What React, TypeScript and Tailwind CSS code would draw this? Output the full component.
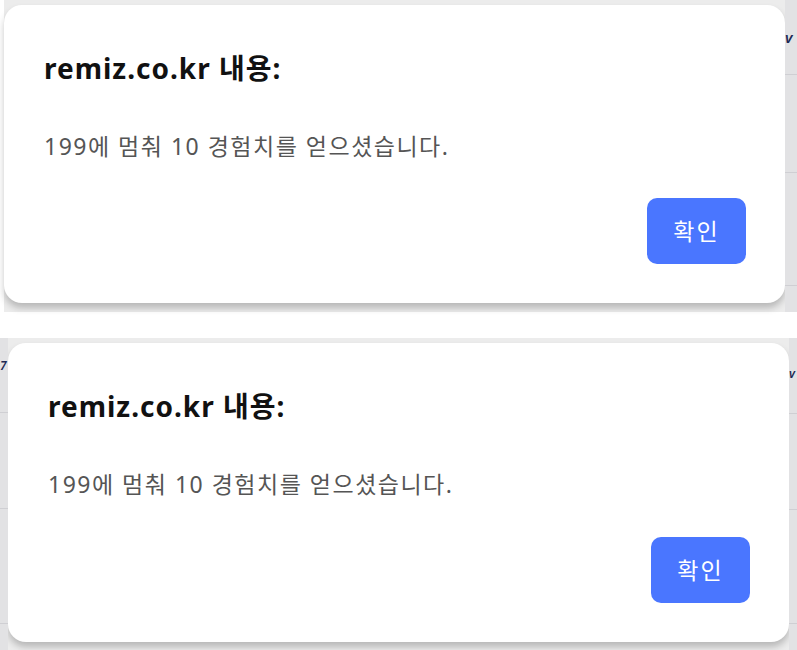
import React from "react";

const FONT = '"Noto Sans", "Noto Sans CJK KR", sans-serif';

function Card() {
  return (
    <div
      className="w-[781px] flex-1 bg-white rounded-[18px] shadow-[0_5px_7px_rgba(0,0,0,0.22)] pl-[40px] pr-[39px] pt-[45px] pb-[39px] flex flex-col"
      style={{ fontFamily: FONT }}
    >
      <div className="text-[28px] leading-[36px] font-bold tracking-[1px] text-[#111]">remiz.co.kr 내용:</div>
      <div className="mt-[45px] text-[23px] leading-[30px] tracking-[1.5px] text-[#555]">199에 멈춰 10 경험치를 얻으셨습니다.</div>
      <div className="mt-auto flex justify-end">
        <button className="w-[99px] h-[66px] rounded-[10px] bg-[#4a76ff] text-white text-[23px] tracking-[2px] flex items-center justify-center">
          확인
        </button>
      </div>
    </div>
  );
}

function SideStrip({ glyph, glyphTop, lines, width, size }: { glyph: string; glyphTop: number; lines: number[]; width: string; size: string }) {
  return (
    <div className={`${width} h-full bg-[#e2e2e4] relative`}>
      <div
        className={`absolute left-0 ${size} leading-none italic font-semibold text-[#1e2a55]`}
        style={{ top: glyphTop, fontFamily: FONT }}
      >
        {glyph}
      </div>
      {lines.map((y) => (
        <div key={y} className="absolute left-0 right-0 h-px bg-[#cfcfd3]" style={{ top: y }} />
      ))}
    </div>
  );
}

export default function App() {
  return (
    <div className="w-[797px] h-[650px] bg-white flex flex-col overflow-hidden">
      <div className="h-[312px] flex">
        <div className="w-[4px] h-full bg-white" />
        <div className="w-[781px] h-full bg-[#ececec] flex flex-col pt-[5px] pb-[9px]">
          <Card />
        </div>
        <SideStrip glyph="v" glyphTop={30} lines={[74, 172, 285]} width="w-[12px]" size="text-[15px]" />
      </div>
      <div className="h-[26px]" />
      <div className="h-[312px] flex">
        <SideStrip glyph="7" glyphTop={22} lines={[74, 170, 285]} width="w-[8px]" size="text-[12px]" />
        <div className="w-[781px] h-full bg-[#ececec] flex flex-col pt-[5px] pb-[8px]">
          <Card />
        </div>
        <SideStrip glyph="v" glyphTop={30} lines={[75, 171, 285]} width="w-[8px]" size="text-[12px]" />
      </div>
    </div>
  );
}
